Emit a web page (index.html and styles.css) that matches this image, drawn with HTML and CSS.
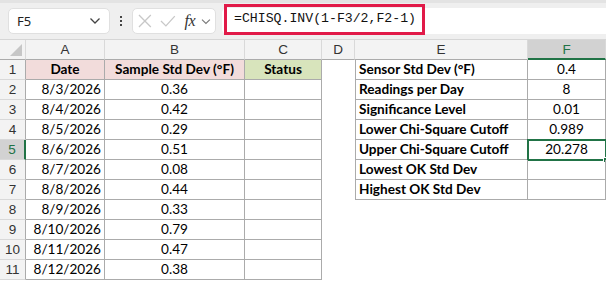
FILE: index.html
```html
<!DOCTYPE html>
<html lang="en">
<head>
    <meta charset="UTF-8">
    <title>CHISQ.INV sheet</title>
    <link rel="stylesheet" href="styles.css">
</head>
<body>

<div class="topbar">
    <div class="namebox">
        <span>F5</span>
        <svg class="chev" width="12" height="8" viewBox="0 0 12 8"><path d="M1.5 1.5 L6 6 L10.5 1.5" fill="none" stroke="#444" stroke-width="1.3"/></svg>
    </div>
    <div class="dots"><i></i><i></i><i></i></div>
    <div class="fxbox">
        <svg width="16" height="16" viewBox="0 0 16 16"><path d="M2 2 L14 14 M14 2 L2 14" stroke="#c8c8c8" stroke-width="1.3"/></svg>
        <svg width="18" height="16" viewBox="0 0 18 16"><path d="M2 8 L7 13 L16 3" fill="none" stroke="#c8c8c8" stroke-width="1.3"/></svg>
        <span class="fx">fx</span>
        <svg width="10" height="7" viewBox="0 0 10 7"><path d="M1 1.5 L5 5.5 L9 1.5" fill="none" stroke="#777" stroke-width="1.1"/></svg>
    </div>
    <div class="formula">
        <div class="hl">=CHISQ.INV(1-F3/2,F2-1)</div>
    </div>
</div>

<div class="sheet">
    <div class="corner"></div>
    <div class="ch">A</div><div class="ch">B</div><div class="ch">C</div><div class="ch">D</div><div class="ch">E</div><div class="ch sel">F</div>

    <div class="rh">1</div>
    <div class="c b hd pink">Date</div><div class="c b hd pink ctr">Sample Std Dev (°F)</div><div class="c b hd green ctr">Status</div><div class="c"></div>
    <div class="c b bl lbl">Sensor Std Dev (°F)</div><div class="c b ctr">0.4</div>

    <div class="rh">2</div>
    <div class="c b rt">8/3/2026</div><div class="c b ctr">0.36</div><div class="c b"></div><div class="c"></div>
    <div class="c b bl lbl">Readings per Day</div><div class="c b ctr">8</div>

    <div class="rh">3</div>
    <div class="c b rt">8/4/2026</div><div class="c b ctr">0.42</div><div class="c b"></div><div class="c"></div>
    <div class="c b bl lbl">Significance Level</div><div class="c b ctr">0.01</div>

    <div class="rh">4</div>
    <div class="c b rt">8/5/2026</div><div class="c b ctr">0.29</div><div class="c b"></div><div class="c"></div>
    <div class="c b bl lbl">Lower Chi-Square Cutoff</div><div class="c b ctr">0.989</div>

    <div class="rh sel">5</div>
    <div class="c b rt">8/6/2026</div><div class="c b ctr">0.51</div><div class="c b"></div><div class="c"></div>
    <div class="c b bl lbl">Upper Chi-Square Cutoff</div><div class="c b ctr active">20.278<span class="handle"></span></div>

    <div class="rh">6</div>
    <div class="c b rt">8/7/2026</div><div class="c b ctr">0.08</div><div class="c b"></div><div class="c"></div>
    <div class="c b bl lbl">Lowest OK Std Dev</div><div class="c b ctr"></div>

    <div class="rh">7</div>
    <div class="c b rt">8/8/2026</div><div class="c b ctr">0.44</div><div class="c b"></div><div class="c"></div>
    <div class="c b bl lbl">Highest OK Std Dev</div><div class="c b ctr"></div>

    <div class="rh">8</div>
    <div class="c b rt">8/9/2026</div><div class="c b ctr">0.33</div><div class="c b"></div><div class="c"></div><div class="c"></div><div class="c"></div>

    <div class="rh">9</div>
    <div class="c b rt">8/10/2026</div><div class="c b ctr">0.79</div><div class="c b"></div><div class="c"></div><div class="c"></div><div class="c"></div>

    <div class="rh">10</div>
    <div class="c b rt">8/11/2026</div><div class="c b ctr">0.47</div><div class="c b"></div><div class="c"></div><div class="c"></div><div class="c"></div>

    <div class="rh">11</div>
    <div class="c b rt">8/12/2026</div><div class="c b ctr">0.38</div><div class="c b"></div><div class="c"></div><div class="c"></div><div class="c"></div>
</div>

</body>
</html>
```

FILE: styles.css
```css
:root { --grid: #ababab; --head: #f3f3f3; --hline: #d9d9d9; --xl: #217346; }
* { box-sizing: border-box; }
body { margin: 0; background: #fff; font-family: 'Lato', 'Liberation Sans', sans-serif; color: #000; overflow: hidden; }

/* Formula bar strip */
.topbar { height: 40px; background: #efefef; border-top: 3px solid #e3e3e3; border-bottom: 1px solid #d6d6d6; display: flex; align-items: center; padding: 0 0 0 8px; }
.namebox { width: 102px; height: 26px; background: #fff; border: 1px solid #e0e0e0; border-radius: 5px; display: flex; align-items: center; justify-content: space-between; padding: 0 8px 0 8px; font-family: 'Noto Sans', sans-serif; font-size: 13px; color: #222; }
.dots { width: 22px; display: flex; flex-direction: column; align-items: center; gap: 2px; }
.dots i { width: 2px; height: 2px; background: #444; }
.fxbox { width: 84px; height: 26px; background: #fff; border: 1px solid #e0e0e0; border-radius: 5px; display: flex; align-items: center; gap: 6px; padding: 0 4px 0 4px; }
.fx { font-family: 'Liberation Serif', serif; font-style: italic; font-size: 16px; color: #333; margin-left: 2px; letter-spacing: -0.5px; }
.formula { flex: 1; height: 26px; margin-left: 6px; background: #fff; border-radius: 5px 0 0 5px; position: relative; }
.hl { position: absolute; left: 2px; top: -4px; width: 201px; height: 31px; border: 3px solid #e11a48; padding: 4px 0 0 7px; font-family: 'Liberation Mono', monospace; font-size: 13.2px; color: #111; white-space: nowrap; }

/* Grid */
.sheet { display: grid; grid-template-columns: 26px 79px 140px 77px 33px 173px 78px; grid-auto-rows: 20px; font-size: 13.6px; }
.corner { background: var(--head); border-right: 1px solid var(--hline); border-bottom: 1px solid var(--grid); position: relative; }
.corner::after { content: ''; position: absolute; right: 3px; bottom: 3px; border-left: 12px solid transparent; border-bottom: 12px solid #c6c6c6; }
.ch { background: var(--head); border-right: 1px solid var(--hline); border-bottom: 1px solid var(--grid); text-align: center; line-height: 19px; color: #333; font-family: 'Liberation Sans', sans-serif; font-size: 13.5px; }
.ch.sel { background: #d2d2d2; color: var(--xl); border-bottom: 2px solid var(--xl); }
.rh { background: var(--head); border-right: 1px solid var(--grid); border-bottom: 1px solid var(--hline); text-align: center; line-height: 19px; color: #333; font-family: 'Liberation Sans', sans-serif; font-size: 13.5px; }
.rh.sel { background: #d2d2d2; color: var(--xl); border-right: 2px solid var(--xl); }

.c { line-height: 19px; white-space: nowrap; padding: 0 3px; position: relative; }
.c.b { border-right: 1px solid var(--grid); border-bottom: 1px solid var(--grid); }
.c.bl { border-left: 1px solid var(--grid); }
.hd { font-weight: bold; text-align: center; }
.pink { background: #f2dcdb; }
.green { background: #d8e4bc; }
.ctr { text-align: center; }
.rt { text-align: right; }
.lbl { font-weight: bold; padding-left: 3px; }
.active { outline: 2px solid var(--xl); outline-offset: -1px; }
.handle { position: absolute; right: -4px; bottom: -4px; width: 6px; height: 6px; background: var(--xl); border: 1px solid #fff; }
```
